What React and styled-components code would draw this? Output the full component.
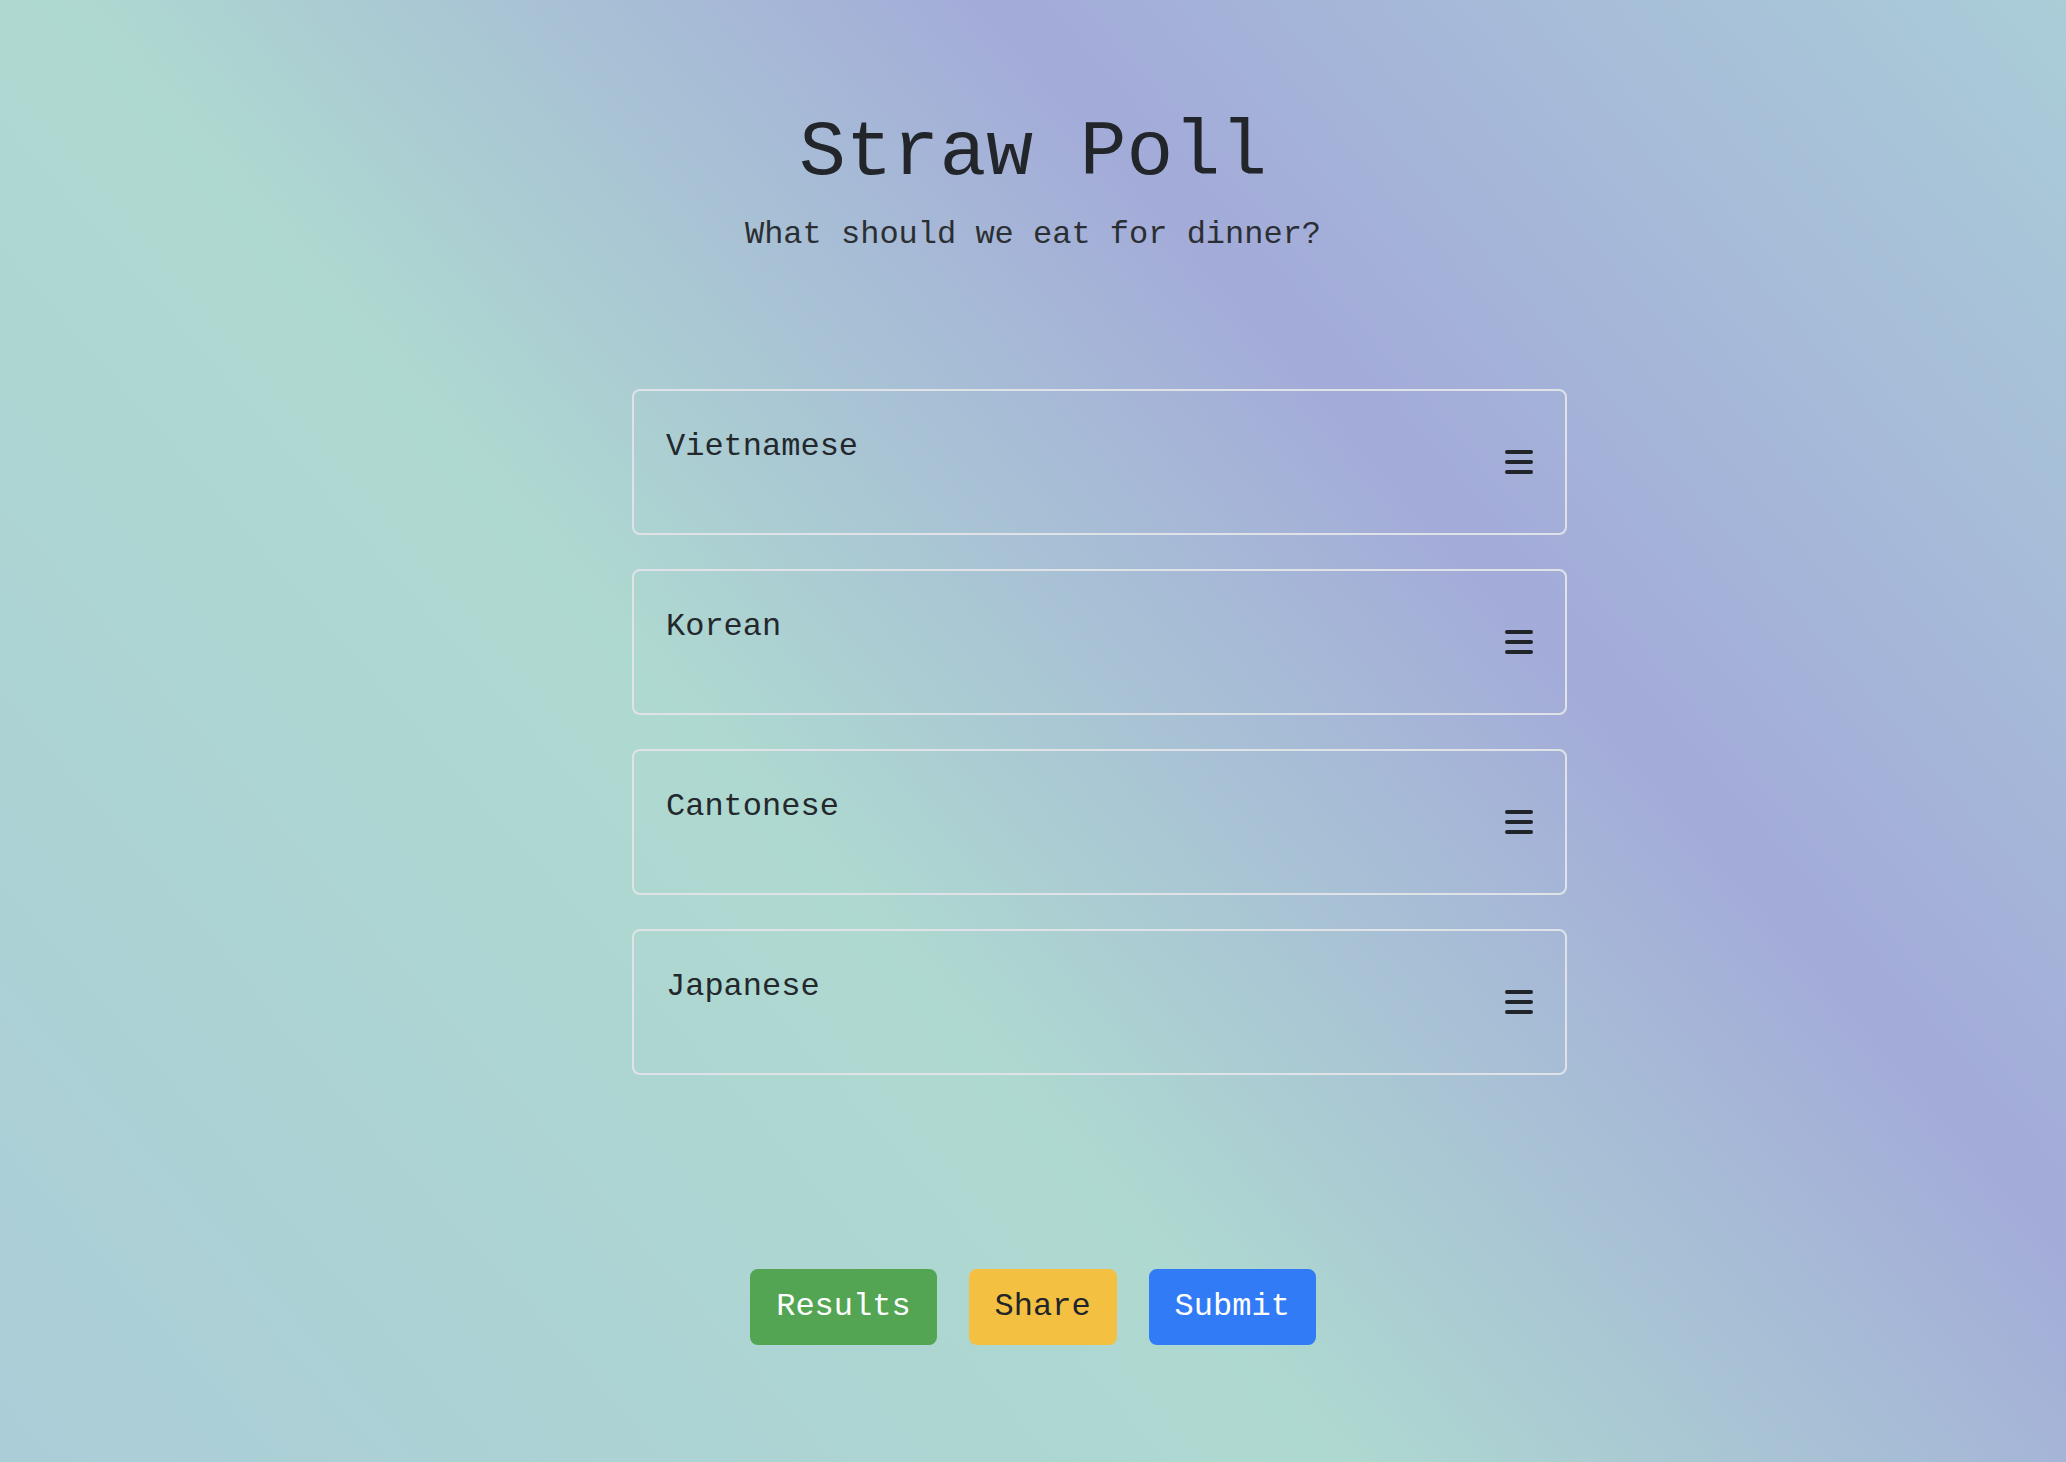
import styled, { createGlobalStyle } from "styled-components";

const GlobalStyle = createGlobalStyle`
    html, body {
        margin: 0;
        padding: 0;
    }
    body {
        min-height: 100vh;
        font-family: "Liberation Mono", "Courier New", monospace;
        color: #212529;
        background: linear-gradient(49deg, #abcdd8 0%, #aed9d0 40%, #a3abd9 68%, #aacdd8 100%);
        background-attachment: fixed;
    }
`;

const Page = styled.div`
    min-height: 100vh;
    display: flex;
    flex-direction: column;
    padding-top: 105px;
    box-sizing: border-box;
`;

const Title = styled.h1`
    margin: 0;
    font-size: 78px;
    line-height: 96px;
    font-weight: normal;
    text-align: center;
    color: #222529;
`;

const Question = styled.p`
    margin: 10px 0 0;
    font-size: 32px;
    line-height: 48px;
    text-align: center;
    color: #2b2f33;
`;

const Options = styled.ul`
    list-style: none;
    padding: 0;
    margin: 130px 0 0 calc(50% - 401px);
    width: 935px;
    display: flex;
    flex-direction: column;
    gap: 34px;
`;

const Option = styled.li`
    box-sizing: border-box;
    height: 146px;
    padding: 32px;
    border: 2px solid #dfe3e8;
    border-radius: 8px;
    display: flex;
    align-items: center;
    justify-content: space-between;
`;

const Label = styled.span`
    align-self: flex-start;
    font-size: 32px;
    line-height: 48px;
    color: #24282c;
`;

const Handle = styled.svg`
    width: 28px;
    height: 24px;
    flex-shrink: 0;
`;

const Actions = styled.div`
    display: flex;
    justify-content: center;
    gap: 32px;
    margin-top: 194px;
    padding-bottom: 118px;
`;

const Button = styled.button`
    font-family: "Liberation Mono", "Courier New", monospace;
    font-size: 32px;
    line-height: 48px;
    padding: 12px 24px;
    border: 2px solid ${props => props.bg};
    border-radius: 8px;
    background: ${props => props.bg};
    color: ${props => props.fg};
    cursor: pointer;
`;

const options = ["Vietnamese", "Korean", "Cantonese", "Japanese"];

function DragIcon() {
    return (
        <Handle viewBox="0 0 28 24">
            <g stroke="#212529" strokeWidth="4" strokeLinecap="round">
                <line x1="2" y1="2" x2="26" y2="2" />
                <line x1="2" y1="12" x2="26" y2="12" />
                <line x1="2" y1="22" x2="26" y2="22" />
            </g>
        </Handle>
    );
}

export default function App() {
    return (
        <>
            <GlobalStyle />
            <Page>
                <Title>Straw Poll</Title>
                <Question>What should we eat for dinner?</Question>
                <Options>
                    {options.map(name => (
                        <Option key={name}>
                            <Label>{name}</Label>
                            <DragIcon />
                        </Option>
                    ))}
                </Options>
                <Actions>
                    <Button bg="#53a553" fg="#ffffff">Results</Button>
                    <Button bg="#f4c042" fg="#212529">Share</Button>
                    <Button bg="#317cf6" fg="#ffffff">Submit</Button>
                </Actions>
            </Page>
        </>
    );
}
